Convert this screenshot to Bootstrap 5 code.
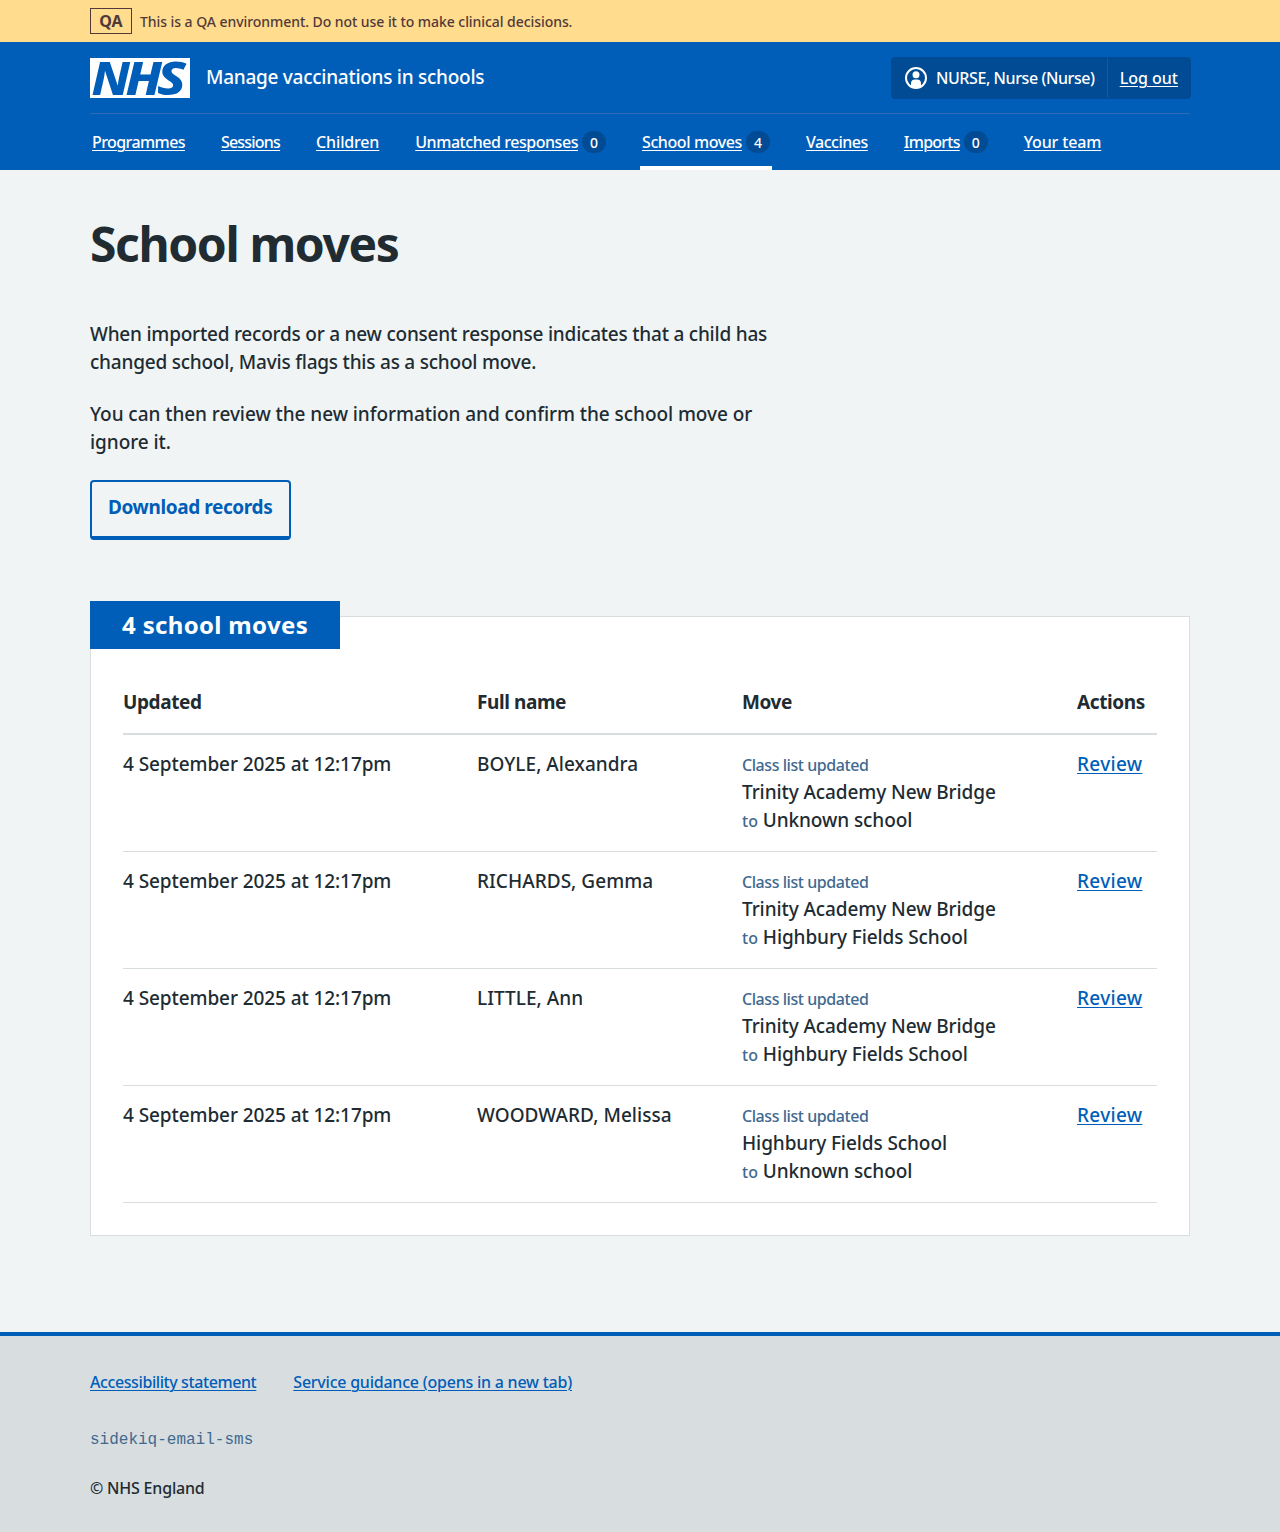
<!DOCTYPE html>
<html lang="en">
<head>
<meta charset="utf-8">
<meta name="viewport" content="width=device-width, initial-scale=1">
<title>School moves</title>
<link href="https://cdn.jsdelivr.net/npm/bootstrap@5.3.0/dist/css/bootstrap.min.css" rel="stylesheet">
<style>
:root { --nhs-blue: #005eb8; --nhs-dark: #004b93; --nhs-line: #d8dde0; --nhs-ink: #212b32; --nhs-muted: #41698f; }
body { font-family: "Noto Sans", "Open Sans", sans-serif; font-weight: 500; font-size: 19px; line-height: 28px; letter-spacing: -.09px; color: var(--nhs-ink); background: #f0f4f5; }
a { text-underline-offset: 2px; text-decoration-thickness: 1px; }
.wrap { width: 1100px; margin-inline: auto; }
.f16 { font-size: 16px; line-height: 24px; }
.fw-strong { font-weight: 700; letter-spacing: -.4px; }

/* environment banner */
.env-bar { background: #ffdc8e; color: #513a39; height: 42px; }
.env-bar .wrap { font-size: 14px; line-height: 27px; letter-spacing: -.06px; gap: 8px; }
.env-tag { width: 42px; height: 26px; border: 1px solid #513a39; font-size: 16px; line-height: 24px; font-weight: 700; text-align: center; }

/* header */
.site-head { background: var(--nhs-blue); height: 128px; color: #fff; }
.site-head a { color: #fff; }
.head-top { height: 72px; border-bottom: 1px solid #2d6cb3; }
.nhs-logo { overflow: visible; }
.service-name { margin-left: 16px; letter-spacing: -.27px; line-height: 26px; margin-top: -1px; }
.account { background: var(--nhs-dark); border-radius: 4px; height: 42px; margin-right: -1px; letter-spacing: -.42px; }
.account > * { height: 40px; padding: 0 12px; }
.account > a { border-left: 1px solid var(--nhs-blue); letter-spacing: 0; padding-right: 13px; }
.main-nav { gap: 32px; height: 56px; }
.main-nav a { display: block; height: 56px; padding: 16px 2px 12px; white-space: nowrap; text-decoration: none; }
.main-nav a span:first-child { text-decoration: underline; text-decoration-thickness: 1px; text-underline-offset: 2px; }
.main-nav a.current { border-bottom: 4px solid #fff; }
.count { display: inline-block; width: 24px; height: 22px; border-radius: 11px; background: var(--nhs-dark); font-size: 14px; line-height: 23px; letter-spacing: 0; text-align: center; margin-left: 4px; }
.t1 { letter-spacing: -.58px; } .t2 { letter-spacing: -.79px; } .t3 { letter-spacing: -.16px; } .t4 { letter-spacing: -.45px; }
.t5 { letter-spacing: -.4px; } .t6 { letter-spacing: -.47px; } .t7 { letter-spacing: -.76px; } .t8 { letter-spacing: -.15px; }

/* content */
.page-main { padding-top: 46px; }
.page-title { font-size: 48px; line-height: 56px; font-weight: 700; letter-spacing: -1.4px; margin: 0 0 48px; }
.intro { width: 690px; }
.intro p { margin: 0 0 24px; letter-spacing: -.22px; }
.intro p + p { letter-spacing: -.06px; }
.btn-records { display: inline-block; height: 60px; padding: 11px 16px 0; border: 2px solid var(--nhs-blue); border-bottom-width: 4px; border-radius: 4px; color: var(--nhs-blue); text-decoration: none; width: 201px; white-space: nowrap; }
.moves-card { border: 1px solid var(--nhs-line); border-radius: 0; padding: 0 32px 32px; margin: 76px 0 96px; color: inherit; }
.moves-label { width: 250px; height: 48px; margin: -16px 0 39px -33px; padding: 8px 32px; background: var(--nhs-blue); color: #fff; font-size: 24px; line-height: 32px; font-weight: 700; letter-spacing: .33px; }
.moves-table { width: 1034px; table-layout: fixed; border-collapse: separate; border-spacing: 0; }
.moves-table th { padding: 0 0 17px; border-bottom: 2px solid var(--nhs-line); }
.moves-table td { padding: 15px 0 17px; border-bottom: 1px solid var(--nhs-line); vertical-align: top; }
.moves-table td:nth-child(2) { letter-spacing: .04px; }
.col-updated { width: 354px; } .col-name { width: 265px; } .col-move { width: 335px; } .col-actions { width: 80px; }
.moves-table a, .site-foot a { color: var(--nhs-blue); }
.moves-table a { letter-spacing: .3px; }
.muted { font-size: 16px; line-height: 1; color: var(--nhs-muted); letter-spacing: -.44px; }
.muted-to { letter-spacing: 0; }

/* footer */
.site-foot { border-top: 4px solid var(--nhs-blue); background: var(--nhs-line); height: 200px; padding-top: 34px; }
.foot-links { gap: 37px; letter-spacing: -.41px; }
.foot-links a + a { letter-spacing: -.23px; }
.release { font-family: "Liberation Mono", monospace; font-weight: 400; color: var(--nhs-muted); letter-spacing: 0; margin: 34px 0 24px; }
.owner { letter-spacing: -.2px; }
</style>
</head>
<body>
<div class="env-bar d-flex align-items-center">
  <div class="wrap d-flex"><div class="env-tag">QA</div><div>This is a QA environment. Do not use it to make clinical decisions.</div></div>
</div>
<header class="site-head">
  <div class="wrap">
    <div class="head-top d-flex align-items-center">
      <svg class="nhs-logo" width="100" height="40" viewBox="0 0 100 40" role="img" aria-label="NHS">
        <path fill="#fff" d="M0 0h100v40H0z"/>
        <g fill="#005eb8" font-family="Noto Sans" font-weight="800" font-style="italic" font-size="46.5" letter-spacing="0">
          <text x="1.500" y="36.700" textLength="38.500" lengthAdjust="spacingAndGlyphs">N</text>
          <text x="35.500" y="36.700" textLength="36.500" lengthAdjust="spacingAndGlyphs">H</text>
          <text x="67" y="36.700" textLength="29" lengthAdjust="spacingAndGlyphs">S</text>
        </g>
      </svg>
      <span class="service-name">Manage vaccinations in schools</span>
      <div class="account f16 d-flex align-items-center ms-auto">
        <span class="d-flex align-items-center">
          <svg class="me-2" width="25" height="24" viewBox="0 0 25 24" aria-hidden="true">
            <circle cx="13" cy="12" r="10" fill="none" stroke="#fff" stroke-width="2"/>
            <circle cx="13" cy="8.800" r="3.500" fill="#fff"/>
            <path fill="#fff" d="M8 20.500v-3a4 4 0 0 1 4-4h2a4 4 0 0 1 4 4v3q-5 3-10 0z"/>
          </svg>
          <span>NURSE, Nurse (Nurse)</span>
        </span>
        <a class="d-flex align-items-center" href="#">Log out</a>
      </div>
    </div>
    <nav class="main-nav f16 d-flex">
      <a href="#"><span class="t1">Programmes</span></a>
      <a href="#"><span class="t2">Sessions</span></a>
      <a href="#"><span class="t3">Children</span></a>
      <a href="#"><span class="t4">Unmatched responses</span><span class="count">0</span></a>
      <a href="#" class="current"><span class="t5">School moves</span><span class="count">4</span></a>
      <a href="#"><span class="t6">Vaccines</span></a>
      <a href="#"><span class="t7">Imports</span><span class="count">0</span></a>
      <a href="#"><span class="t8">Your team</span></a>
    </nav>
  </div>
</header>
<main class="wrap page-main">
  <h1 class="page-title">School moves</h1>
  <div class="intro">
    <p>When imported records or a new consent response indicates that a child has changed school, Mavis flags this as a school move.</p>
    <p>You can then review the new information and confirm the school move or ignore it.</p>
  </div>
  <a class="btn-records fw-strong" href="#">Download records</a>
  <section class="card moves-card">
    <h2 class="moves-label">4 school moves</h2>
    <table class="moves-table">
      <colgroup><col class="col-updated"><col class="col-name"><col class="col-move"><col class="col-actions"></colgroup>
      <thead class="fw-strong"><tr><th>Updated</th><th>Full name</th><th>Move</th><th>Actions</th></tr></thead>
      <tbody>
        <tr><td>4 September 2025 at 12:17pm</td><td>BOYLE, Alexandra</td><td><span class="muted">Class list updated</span><br>Trinity Academy New Bridge<br><span class="muted muted-to">to</span> Unknown school</td><td><a href="#">Review</a></td></tr>
        <tr><td>4 September 2025 at 12:17pm</td><td>RICHARDS, Gemma</td><td><span class="muted">Class list updated</span><br>Trinity Academy New Bridge<br><span class="muted muted-to">to</span> Highbury Fields School</td><td><a href="#">Review</a></td></tr>
        <tr><td>4 September 2025 at 12:17pm</td><td>LITTLE, Ann</td><td><span class="muted">Class list updated</span><br>Trinity Academy New Bridge<br><span class="muted muted-to">to</span> Highbury Fields School</td><td><a href="#">Review</a></td></tr>
        <tr><td>4 September 2025 at 12:17pm</td><td>WOODWARD, Melissa</td><td><span class="muted">Class list updated</span><br>Highbury Fields School<br><span class="muted muted-to">to</span> Unknown school</td><td><a href="#">Review</a></td></tr>
      </tbody>
    </table>
  </section>
</main>
<footer class="site-foot f16">
  <div class="wrap">
    <div class="foot-links d-flex"><a href="#">Accessibility statement</a><a href="#">Service guidance (opens in a new tab)</a></div>
    <div class="release">sidekiq-email-sms</div>
    <div class="owner">© NHS England</div>
  </div>
</footer>
<script src="https://cdn.jsdelivr.net/npm/bootstrap@5.3.0/dist/js/bootstrap.bundle.min.js"></script>
</body>
</html>
